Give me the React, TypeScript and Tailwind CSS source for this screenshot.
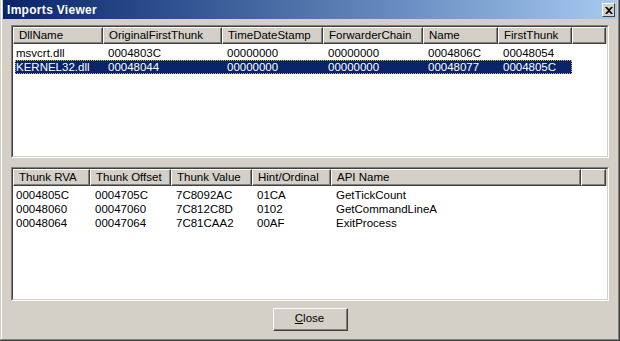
import React from 'react';

type Col = { label: string; w: number };

const importCols: Col[] = [
  { label: 'DllName', w: 90 },
  { label: 'OriginalFirstThunk', w: 119 },
  { label: 'TimeDateStamp', w: 101 },
  { label: 'ForwarderChain', w: 100 },
  { label: 'Name', w: 75 },
  { label: 'FirstThunk', w: 74 },
];

const importRows = [
  ['msvcrt.dll', '0004803C', '00000000', '00000000', '0004806C', '00048054'],
  ['KERNEL32.dll', '00048044', '00000000', '00000000', '00048077', '0004805C'],
];

const thunkCols: Col[] = [
  { label: 'Thunk RVA', w: 77 },
  { label: 'Thunk Offset', w: 81 },
  { label: 'Thunk Value', w: 81 },
  { label: 'Hint/Ordinal', w: 79 },
  { label: 'API Name', w: 250 },
];

const thunkRows = [
  ['0004805C', '0004705C', '7C8092AC', '01CA', 'GetTickCount'],
  ['00048060', '00047060', '7C812C8D', '0102', 'GetCommandLineA'],
  ['00048064', '00047064', '7C81CAA2', '00AF', 'ExitProcess'],
];

function HeaderCell({ label, w }: { label?: string; w?: number }) {
  return (
    <div
      className={`h-[17px] shrink-0 border-t border-l border-t-white border-l-white border-r border-b border-r-[#404040] border-b-[#404040] ${w ? '' : 'flex-1'}`}
      style={w ? { width: w } : undefined}
    >
      <div className="h-full border-r border-b border-r-[#808080] border-b-[#808080] pl-[5px] leading-[15px] whitespace-nowrap overflow-hidden">
        {label}
      </div>
    </div>
  );
}

function ListView({ cols, rows, selected, height }: { cols: Col[]; rows: string[][]; selected?: number; height: number }) {
  const total = cols.reduce((s, c) => s + c.w, 0);
  return (
    <div
      className="border-t border-l border-t-[#808080] border-l-[#808080] border-r border-b border-r-white border-b-white"
      style={{ height }}
    >
      <div className="h-full bg-white border-t border-l border-t-[#404040] border-l-[#404040] border-r border-b border-r-[#d4d0c8] border-b-[#d4d0c8] overflow-hidden">
        <div className="flex bg-[#d4d0c8] pr-[1px]">
          {cols.map((c) => (
            <HeaderCell key={c.label} label={c.label} w={c.w} />
          ))}
          <HeaderCell />
        </div>
        <div className="pt-[2px]">
          {rows.map((r, i) => {
            const sel = i === selected;
            return (
              <div key={i} className="h-[14px] flex">
                <div
                  className={`flex ml-[2px] h-full ${sel ? 'bg-[#0a246a] text-white outline-1 outline-dotted outline-[#c8b060] -outline-offset-1' : 'text-black'}`}
                  style={{ width: total - 2 }}
                >
                  {r.map((v, j) => (
                    <div
                      key={j}
                      className={`shrink-0 leading-[14px] whitespace-nowrap overflow-hidden ${j === 0 ? 'pl-[1px]' : 'pl-[5px]'}`}
                      style={{ width: j === 0 ? cols[j].w - 2 : cols[j].w }}
                    >
                      {v}
                    </div>
                  ))}
                </div>
              </div>
            );
          })}
        </div>
      </div>
    </div>
  );
}

export default function App() {
  return (
    <div
      className="w-[620px] h-[341px] bg-[#d4d0c8] text-[11.5px] text-black border-r border-b border-r-[#404040] border-b-[#404040]"
      style={{ fontFamily: '"Liberation Sans", Arial, sans-serif' }}
    >
      <div className="h-full flex flex-col border-l border-l-[#d4d0c8] border-b border-r border-b-[#808080] border-r-[#808080]">
        <div className="h-full flex flex-col border-l border-l-white pl-[1px] pr-[1px]">
          {/* Title bar */}
          <div className="h-[19px] flex items-center justify-between bg-gradient-to-r from-[#0a246a] to-[#a6caf0] pl-[4px] pr-[2px]">
            <span className="text-white font-bold text-[12px] tracking-[0.3px]">Imports Viewer</span>
            <button className="w-[9px] h-[12px] box-content border-t border-l border-t-white border-l-white border-r border-b border-r-[#404040] border-b-[#404040] bg-[#d4d0c8] flex items-center justify-center px-[1px] mt-[1px]">
              <svg width="8" height="7" viewBox="0 0 8 7">
                <path d="M0 0h2l2 2 2-2h2L5 3.5 8 7H6L4 5 2 7H0l3-3.5z" fill="#000" />
              </svg>
            </button>
          </div>

          <div className="flex-1 flex flex-col pl-[8px] pr-[8px] pt-[6px]">
            <ListView cols={importCols} rows={importRows} selected={1} height={133} />
            <div className="h-[9px]" />
            <ListView cols={thunkCols} rows={thunkRows} height={134} />
            <div className="flex justify-center pt-[7px]">
              <button className="w-[75px] h-[23px] border-t border-l border-t-white border-l-white border-r border-b border-r-[#404040] border-b-[#404040] bg-[#d4d0c8]">
                <div className="h-full border-r border-b border-r-[#808080] border-b-[#808080] flex items-center justify-center">
                  <span>
                    <span className="underline underline-offset-1">C</span>lose
                  </span>
                </div>
              </button>
            </div>
          </div>
        </div>
      </div>
    </div>
  );
}
